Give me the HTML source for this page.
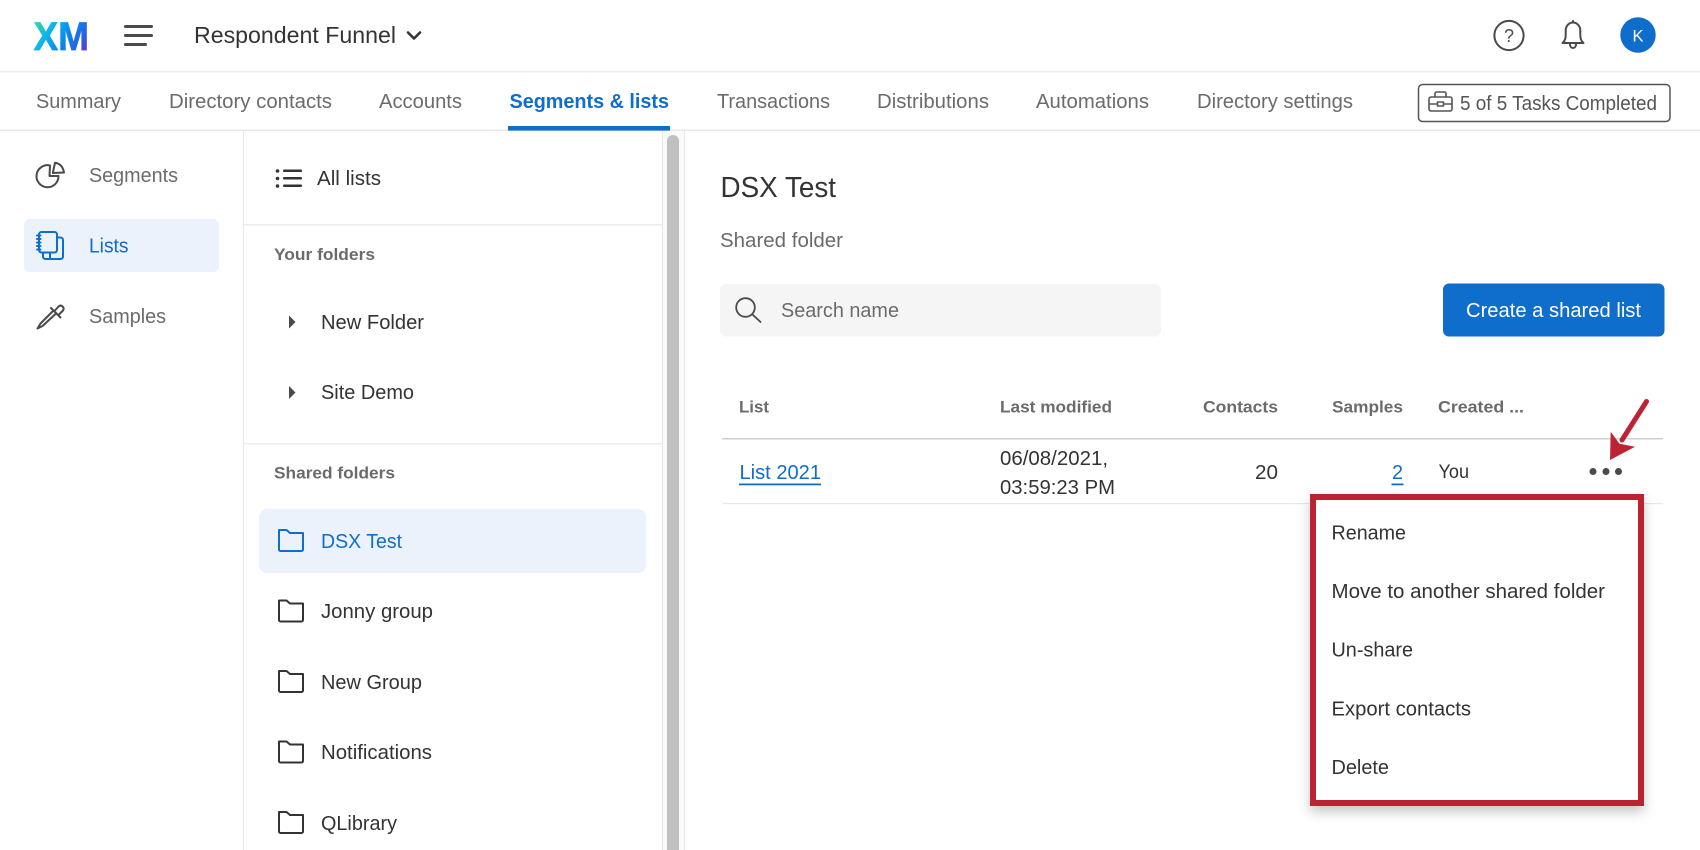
<!DOCTYPE html>
<html lang="en"><head><meta charset="utf-8"><title>Segments &amp; lists</title>
<style>
html,body{margin:0;padding:0;width:1700px;height:850px;overflow:hidden;background:#fff}
svg{display:block;font-family:"Liberation Sans",sans-serif}
text{fill:#333;font-size:20px}
.g{fill:#6b6b6b}
.h{fill:#6b6b6b;font-weight:700;font-size:17px}
.b{fill:#0f6dcc}
.i{fill:none;stroke:#4a4a4a;stroke-width:2;stroke-linecap:round;stroke-linejoin:round}
.k{fill:none;stroke:#333;stroke-width:2;stroke-linejoin:round}
.ib{fill:none;stroke:#0f6dcc;stroke-width:2;stroke-linecap:round;stroke-linejoin:round}
</style></head><body>
<svg width="1700" height="850" viewBox="0 0 1700 850" xmlns="http://www.w3.org/2000/svg">
<defs>
<linearGradient id="xm" x1="36" y1="20" x2="86" y2="52" gradientUnits="userSpaceOnUse">
<stop offset="0" stop-color="#2fdca0"/><stop offset=".28" stop-color="#0fb4ea"/><stop offset=".62" stop-color="#0a84ec"/><stop offset=".85" stop-color="#2f5be4"/><stop offset="1" stop-color="#6a2fd6"/>
</linearGradient>
<filter id="sh" x="-10%" y="-10%" width="120%" height="120%"><feDropShadow dx="0" dy="6" stdDeviation="6" flood-color="#000" flood-opacity=".22"/></filter>
</defs>

<!-- structure lines -->
<rect x="0" y="71" width="1700" height="1.5" fill="#ececec"/>
<rect x="0" y="129.5" width="1700" height="1.5" fill="#e8e8e8"/>
<rect x="243" y="131" width="1" height="719" fill="#e8e8e8"/>
<rect x="243" y="224" width="419" height="1.5" fill="#ececec"/>
<rect x="243" y="443" width="419" height="1.5" fill="#ececec"/>
<rect x="662" y="131" width="23" height="719" fill="#fafafa"/>
<rect x="662" y="131" width="1" height="719" fill="#e8e8e8"/>
<rect x="684" y="131" width="1" height="719" fill="#e8e8e8"/>
<path d="M667 850V141a6 6 0 0 1 12 0V850Z" fill="#c0c0c0"/>

<!-- header -->
<text x="33.500" y="50" font-weight="700" textLength="55.500" lengthAdjust="spacingAndGlyphs" stroke="url(#xm)" stroke-width=".7" style="fill:url(#xm);font-size:40px">XM</text>
<rect x="124" y="25" width="29" height="3" rx="1.5" fill="#4a4a4a"/>
<rect x="124" y="34" width="29" height="3" rx="1.5" fill="#4a4a4a"/>
<rect x="124" y="43" width="23" height="3" rx="1.5" fill="#4a4a4a"/>
<text x="194" y="43" textLength="202" lengthAdjust="spacingAndGlyphs" style="font-size:23px">Respondent Funnel</text>
<path d="M408 32.500l6 6 6-6" fill="none" stroke="#333" stroke-width="2.600" stroke-linecap="round" stroke-linejoin="round"/>

<circle cx="1509" cy="35.500" r="14.600" class="i"/>
<text x="1509" y="42" text-anchor="middle" style="font-size:18px;fill:#4a4a4a">?</text>
<path d="M1562.500 43c2.500-2 3.200-4.500 3.200-8v-4.500c0-4.500 3.300-8 7.300-8s7.300 3.500 7.300 8V35c0 3.500.7 6 3.200 8Z" class="i"/>
<path d="M1570 44.500c0 2 1.300 3.500 3 3.500s3-1.500 3-3.500M1573 21v1.500" class="i"/>
<circle cx="1638" cy="35" r="17.700" fill="#0f6dcc"/>
<text x="1638" y="41.500" text-anchor="middle" style="font-size:16.500px;fill:#fff">K</text>

<!-- tabs -->
<text class="g" x="36" y="108" textLength="85" lengthAdjust="spacingAndGlyphs">Summary</text>
<text class="g" x="169" y="108" textLength="163" lengthAdjust="spacingAndGlyphs">Directory contacts</text>
<text class="g" x="379" y="108" textLength="83" lengthAdjust="spacingAndGlyphs">Accounts</text>
<text class="b" x="509.500" y="108" font-weight="700" textLength="159.500" lengthAdjust="spacingAndGlyphs">Segments &amp; lists</text>
<rect x="508" y="126" width="162" height="4.600" fill="#0f6dcc"/>
<text class="g" x="717" y="108" textLength="113" lengthAdjust="spacingAndGlyphs">Transactions</text>
<text class="g" x="877" y="108" textLength="112" lengthAdjust="spacingAndGlyphs">Distributions</text>
<text class="g" x="1036" y="108" textLength="113" lengthAdjust="spacingAndGlyphs">Automations</text>
<text class="g" x="1197" y="108" textLength="156" lengthAdjust="spacingAndGlyphs">Directory settings</text>
<rect x="1418.500" y="84.500" width="251.500" height="37" rx="4" fill="#fff" stroke="#555" stroke-width="1.500"/>
<g fill="none" stroke="#555" stroke-width="1.600" stroke-linejoin="round">
<rect x="1429" y="97" width="23" height="14" rx="2"/>
<path d="M1435 97v-3.500a1.500 1.500 0 0 1 1.500-1.500h8a1.500 1.500 0 0 1 1.500 1.500V97M1429 104h23"/>
<rect x="1437.500" y="102" width="6" height="4" fill="#fff"/>
</g>
<text class="g" x="1460" y="110" textLength="197" lengthAdjust="spacingAndGlyphs" style="fill:#555">5 of 5 Tasks Completed</text>

<!-- left sidebar -->
<rect x="24" y="219" width="195" height="53" rx="6" fill="#ecf2fb"/>
<g class="i">
<path d="M50 165.500A11 11 0 1 0 58.500 176H49.500Z"/>
<path d="M55 162.800C60 163.500 63 167 64 172.500L52.800 173Z"/>
</g>
<text class="g" x="89" y="182" textLength="89" lengthAdjust="spacingAndGlyphs">Segments</text>
<g class="ib">
<rect x="39" y="232" width="18" height="20.500" rx="2.500"/>
<path d="M57 237.500h3.500a2.500 2.500 0 0 1 2.500 2.500v16.500a2.500 2.500 0 0 1-2.500 2.500H45.500a2.500 2.500 0 0 1-2.500-2.500v-4M50 252.500V259"/>
<path d="M37 235.500h3.500M37 239h3.500M37 242.500h3.500M37 246h3.500M37 249.500h3.500"/>
</g>
<text class="b" x="89" y="252.500" textLength="39.500" lengthAdjust="spacingAndGlyphs">Lists</text>
<g class="i">
<path d="M54.500 311l4.500-5a3.100 3.100 0 0 1 4 4.500l-4.500 4.500"/>
<path d="M51 308l9.500 9.500"/>
<path d="M52.500 311.500L40.500 323.500L37.500 328.500L42.500 326L55.500 314"/>
</g>
<text class="g" x="89" y="323" textLength="77" lengthAdjust="spacingAndGlyphs">Samples</text>

<!-- folder panel -->
<g fill="#333">
<circle cx="277.500" cy="171" r="1.800"/><circle cx="277.500" cy="178.500" r="1.800"/><circle cx="277.500" cy="186" r="1.800"/>
<rect x="283" y="169.500" width="19" height="2.500" rx="1"/><rect x="283" y="177" width="19" height="2.500" rx="1"/><rect x="283" y="184.500" width="19" height="2.500" rx="1"/>
</g>
<text x="317" y="185" textLength="64" lengthAdjust="spacingAndGlyphs">All lists</text>
<text class="h" x="274" y="260" textLength="101" lengthAdjust="spacingAndGlyphs">Your folders</text>
<path d="M289 315.500l6.500 6.500-6.500 6.500Z" fill="#4a4a4a"/>
<text x="321" y="329" textLength="103" lengthAdjust="spacingAndGlyphs">New Folder</text>
<path d="M289 386l6.500 6.500-6.500 6.500Z" fill="#4a4a4a"/>
<text x="321" y="399" textLength="93" lengthAdjust="spacingAndGlyphs">Site Demo</text>
<text class="h" x="274" y="478.500" textLength="121" lengthAdjust="spacingAndGlyphs">Shared folders</text>

<rect x="259" y="509" width="387" height="64" rx="8" fill="#ecf2fb"/>
<path d="M279 530h7.500l3.500 3h13v16.500a1.500 1.500 0 0 1-1.500 1.500h-21a1.500 1.500 0 0 1-1.500-1.500Z" class="ib"/>
<text class="b" x="321" y="548" textLength="81" lengthAdjust="spacingAndGlyphs">DSX Test</text>
<path d="M279 600.500h7.500l3.500 3h13V620a1.500 1.500 0 0 1-1.500 1.500h-21a1.500 1.500 0 0 1-1.500-1.500Z" class="k"/>
<text x="321" y="618" textLength="112" lengthAdjust="spacingAndGlyphs">Jonny group</text>
<path d="M279 671h7.500l3.500 3h13v16.500a1.500 1.500 0 0 1-1.500 1.500h-21a1.500 1.500 0 0 1-1.500-1.500Z" class="k"/>
<text x="321" y="689" textLength="101" lengthAdjust="spacingAndGlyphs">New Group</text>
<path d="M279 741.500h7.500l3.500 3h13V761a1.500 1.500 0 0 1-1.500 1.500h-21a1.500 1.500 0 0 1-1.500-1.500Z" class="k"/>
<text x="321" y="759" textLength="111" lengthAdjust="spacingAndGlyphs">Notifications</text>
<path d="M279 812h7.500l3.500 3h13v16.500a1.500 1.500 0 0 1-1.500 1.500h-21a1.500 1.500 0 0 1-1.500-1.500Z" class="k"/>
<text x="321" y="830" textLength="76" lengthAdjust="spacingAndGlyphs">QLibrary</text>

<!-- main -->
<text x="720.500" y="197" textLength="115.500" lengthAdjust="spacingAndGlyphs" style="font-size:29px">DSX Test</text>
<text class="g" x="720" y="247" textLength="123" lengthAdjust="spacingAndGlyphs">Shared folder</text>
<rect x="720" y="284" width="441" height="52.500" rx="6" fill="#f5f5f5"/>
<circle cx="745.500" cy="307.500" r="9.300" fill="none" stroke="#4a4a4a" stroke-width="1.800"/>
<path d="M752.500 314.500l8 7.500" stroke="#4a4a4a" stroke-width="1.800" stroke-linecap="round"/>
<text class="g" x="781" y="317" textLength="118" lengthAdjust="spacingAndGlyphs">Search name</text>
<rect x="1443" y="283.500" width="221.500" height="53" rx="6" fill="#0f6dcc"/>
<text x="1466" y="317" textLength="175" lengthAdjust="spacingAndGlyphs" style="fill:#fff">Create a shared list</text>

<text class="h" x="739" y="412.500" textLength="30" lengthAdjust="spacingAndGlyphs">List</text>
<text class="h" x="1000" y="412.500" textLength="112" lengthAdjust="spacingAndGlyphs">Last modified</text>
<text class="h" x="1203" y="412.500" textLength="75" lengthAdjust="spacingAndGlyphs">Contacts</text>
<text class="h" x="1332" y="412.500" textLength="71" lengthAdjust="spacingAndGlyphs">Samples</text>
<text class="h" x="1438" y="412.500" textLength="86" lengthAdjust="spacingAndGlyphs">Created ...</text>
<rect x="722" y="438" width="941" height="1.500" fill="#cfcfcf"/>
<rect x="722" y="503" width="941" height="1.200" fill="#e8e8e8"/>
<text class="b" x="739.500" y="479" textLength="81.500" lengthAdjust="spacingAndGlyphs">List 2021</text>
<rect x="739" y="483.500" width="82" height="1.800" fill="#0f6dcc"/>
<text x="1000" y="465" textLength="108" lengthAdjust="spacingAndGlyphs" style="font-size:20px">06/08/2021,</text>
<text x="1000" y="494" textLength="115" lengthAdjust="spacingAndGlyphs" style="font-size:20px">03:59:23 PM</text>
<text x="1255" y="479" textLength="23" lengthAdjust="spacingAndGlyphs">20</text>
<text class="b" x="1392" y="479" textLength="11" lengthAdjust="spacingAndGlyphs">2</text>
<rect x="1391.500" y="483.500" width="12" height="1.800" fill="#0f6dcc"/>
<text x="1438.500" y="478" textLength="30.500" lengthAdjust="spacingAndGlyphs" style="font-size:19px">You</text>
<circle cx="1593" cy="471.500" r="3.500" fill="#4a4a4a"/><circle cx="1606" cy="471.500" r="3.500" fill="#4a4a4a"/><circle cx="1618.500" cy="471.500" r="3.500" fill="#4a4a4a"/>

<!-- arrow -->
<path d="M1646.500 401.500L1622 440" stroke="#bd2433" stroke-width="5" stroke-linecap="round" fill="none"/>
<path d="M1610 460l.7-28.300 8.800 12 15.500 3Z" fill="#bd2433"/>

<!-- dropdown -->
<rect x="1313" y="497" width="328" height="306" fill="#fff" stroke="#bd2433" stroke-width="6" filter="url(#sh)"/>
<text x="1331.500" y="539.500" textLength="74.500" lengthAdjust="spacingAndGlyphs">Rename</text>
<text x="1331.500" y="598" textLength="273.500" lengthAdjust="spacingAndGlyphs">Move to another shared folder</text>
<text x="1331.500" y="656.500" textLength="81.500" lengthAdjust="spacingAndGlyphs">Un-share</text>
<text x="1331.500" y="715.500" textLength="139.500" lengthAdjust="spacingAndGlyphs">Export contacts</text>
<text x="1331.500" y="774" textLength="57.500" lengthAdjust="spacingAndGlyphs">Delete</text>
</svg>
</body></html>
